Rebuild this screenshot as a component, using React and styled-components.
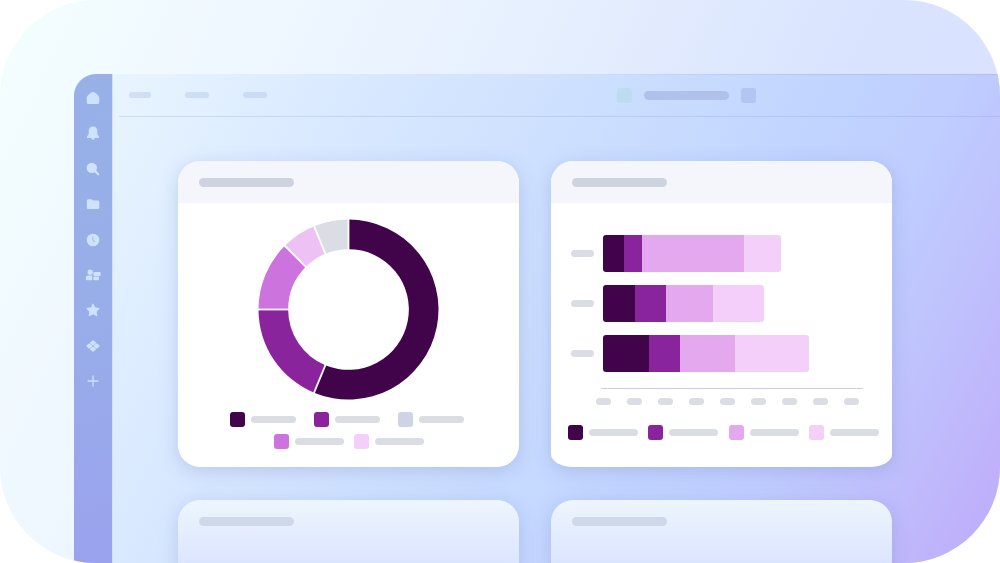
import React from 'react';
import styled, { createGlobalStyle } from 'styled-components';

const colors = {
  plum: '#41044a',
  purple: '#8a249d',
  orchid: '#cc73de',
  pink: '#e4a8ef',
  blush: '#f3cffa',
  rose: '#eec1f5',
  silver: '#cfd3e3',
  grey: '#dbdde4',
};

const GlobalStyle = createGlobalStyle`
  * {
    box-sizing: border-box;
  }
  body {
    margin: 0;
    background: #fff;
    font-family: 'Liberation Sans', sans-serif;
  }
`;

const Stage = styled.div`
  display: flex;
  height: 100vh;
  padding: 74px 0 0 74px;
  overflow: hidden;
  border-radius: 96px;
  background: linear-gradient(115deg, #f4fefe 0%, #eff7ff 22%, #e6effe 45%, #dae4fe 68%, #d8defe 100%);
`;

const Sidebar = styled.nav`
  flex: none;
  width: 39px;
  padding-top: 16px;
  border-right: 1px solid #cfe0fb;
  border-top-left-radius: 22px;
  background: linear-gradient(170deg, #97b1e7 0%, #98ade9 50%, #9aa2ee 100%);
`;

const IconList = styled.div`
  display: flex;
  flex-direction: column;
  align-items: center;
  justify-content: space-between;
  height: 299px;
`;

const IconButton = styled.button`
  display: block;
  width: 16px;
  height: 16px;
  padding: 0;
  border: none;
  background: transparent;
  color: #cfe2fc;
  cursor: pointer;

  svg {
    display: block;
  }
`;

const Main = styled.main`
  flex: 1;
  min-width: 0;
  background: linear-gradient(
    117deg,
    #e8f5ff 0%,
    #d8e8ff 23%,
    #cbdeff 46%,
    #c1d4ff 64%,
    #bfcdff 75%,
    #bfc2fd 84%,
    #bfb0fb 96%
  );
`;

const TopBar = styled.header`
  display: flex;
  align-items: center;
  height: 43px;
  margin-left: 6px;
  padding: 0 244px 0 10px;
  border-bottom: 1px solid rgba(120, 150, 210, 0.24);
  background: linear-gradient(90deg, transparent 50%, rgba(150, 175, 250, 0.45) 80%) top / 100% 1px no-repeat;
`;

const TopLinks = styled.div`
  display: flex;
  gap: 34px;
`;

const TopLink = styled.a`
  display: block;
  width: ${props => props.$width}px;
  height: 6px;
  border-radius: 3px;
  background: rgba(130, 155, 200, 0.22);
`;

const TopTools = styled.div`
  display: flex;
  align-items: center;
  gap: 12px;
  margin-left: auto;
`;

const ToolButton = styled.button`
  width: 15px;
  height: 15px;
  padding: 0;
  border: none;
  border-radius: 3px;
  background: ${props => props.$color};
`;

const Address = styled.div`
  width: 85px;
  height: 9px;
  border-radius: 5px;
  background: #b0c2eb;
`;

const CardGrid = styled.div`
  display: grid;
  grid-template-columns: 1fr 1fr;
  gap: 33px 32px;
  padding: 44px 108px 0 65px;
`;

const Card = styled.section`
  height: 306px;
  overflow: hidden;
  border-radius: ${props => (props.$flat ? '22px / 22px 22px 13px 13px' : '22px')};
  background: ${props => (props.$faded ? 'linear-gradient(#edf5fc, #dce5ff 64px)' : '#fff')};
  box-shadow: 0 4px 18px rgba(100, 120, 180, 0.26);
`;

const CardHeader = styled.div`
  display: flex;
  align-items: center;
  height: 42px;
  padding: 0 21px;
  background: ${props => (props.$faded ? 'transparent' : '#f4f6fb')};
`;

const CardTitle = styled.div`
  width: 95px;
  height: 9px;
  border-radius: 5px;
  background: ${props => (props.$faded ? '#ced8e9' : '#cfd3df')};
`;

const DonutBody = styled.div`
  display: flex;
  flex-direction: column;
  align-items: center;
  padding-top: 16px;

  svg {
    display: block;
    margin-bottom: 12px;
  }
`;

const Legend = styled.div`
  display: flex;
  justify-content: center;
  gap: ${props => props.$gap}px;
  margin-bottom: 7px;
`;

const LegendItem = styled.div`
  display: flex;
  align-items: center;
  gap: 6px;
`;

const Swatch = styled.span`
  width: 15px;
  height: 15px;
  border-radius: 3px;
  background: ${props => props.$color};
`;

const Pill = styled.span`
  width: ${props => props.$width}px;
  height: 7px;
  border-radius: 4px;
  background: ${colors.grey};
`;

const LegendGroup = styled.div`
  padding-right: 4px;
`;

const BarBody = styled.div`
  padding: 32px 29px 0 20px;
`;

const BarRow = styled.div`
  display: flex;
  align-items: center;
  gap: 9px;
  margin-bottom: 13px;
`;

const Track = styled.div`
  display: flex;
  flex: 1;
  height: 37px;
`;

const Segment = styled.div`
  background: ${props => props.$color};

  &:first-child {
    border-radius: 3px 0 0 3px;
  }
  &:last-child {
    border-radius: 0 3px 3px 0;
  }
`;

const AxisLine = styled.div`
  height: 1px;
  margin: 16px 0 9px 30px;
  background: #cccdd6;
`;

const Axis = styled.div`
  display: flex;
  justify-content: space-between;
  margin: 0 4px 0 25px;
`;

const BarLegend = styled.div`
  display: flex;
  justify-content: space-between;
  padding: 20px 13px 0 17px;
`;

const icons = [
  {
    label: 'Home',
    art: <path d="M1.700 8Q1.800 6.200 3 5.200L5.800 2.800Q8 1.200 10.200 2.800L13 5.200Q14.200 6.200 14.300 8V12.300Q14.300 14 12.600 14H3.400Q1.700 14 1.700 12.300Z" />,
  },
  {
    label: 'Notifications',
    art: <path d="M8 1.500C5.200 1.500 3.700 3.600 3.700 6.100V9.200L2 11.400V12.900H6.100Q6.500 14.700 8 14.700T9.900 12.900H14V11.400L12.300 9.200V6.100C12.300 3.600 10.800 1.500 8 1.500Z" />,
  },
  {
    label: 'Search',
    art: (
      <>
        <circle cx="6.800" cy="6.900" r="5.200" />
        <path d="M10 10L13.200 13.200" stroke="currentColor" strokeWidth="2.200" strokeLinecap="round" />
      </>
    ),
  },
  {
    label: 'Files',
    art: <path d="M1.800 4.800Q1.800 3.300 3.300 3.300H6.500L8 4.600H12.800Q14.300 4.600 14.300 6.100V11.600Q14.300 13.100 12.800 13.100H3.300Q1.800 13.100 1.800 11.600Z" />,
  },
  {
    label: 'Recent',
    art: (
      <>
        <circle cx="8" cy="8" r="6.300" />
        <path d="M7.800 4.800V8.300L10 10" fill="none" stroke="#a9c0f0" strokeWidth="1.200" />
      </>
    ),
  },
  {
    label: 'People',
    art: (
      <>
        <circle cx="5.200" cy="5.200" r="2.600" />
        <path d="M.8 10.900Q.8 8.500 3.200 8.500H7.200V13.300H2.200Q.8 13.300 .8 11.900Z" />
        <rect x="8.300" y="4.900" width="7.400" height="4" rx="1.200" />
        <rect x="8.300" y="9.600" width="5.700" height="3.700" rx="1" />
      </>
    ),
  },
  {
    label: 'Favorites',
    art: (
      <path
        d="M8 2.300L9.800 6L13.900 6.600L10.900 9.400L11.700 13.500L8 11.600L4.300 13.500L5.100 9.400L2.100 6.600L6.200 6Z"
        stroke="currentColor"
        strokeWidth="1.300"
        strokeLinejoin="round"
      />
    ),
  },
  {
    label: 'Apps',
    art: (
      <g stroke="currentColor" strokeWidth="1.400" strokeLinejoin="round">
        <path d="M8 3L10.300 4.900L8 6.800L5.700 4.900Z" />
        <path d="M8 9.200L10.300 11.100L8 13L5.700 11.100Z" />
        <path d="M4.300 6.100L6.600 8L4.300 9.900L2 8Z" />
        <path d="M11.700 6.100L14 8L11.700 9.900L9.400 8Z" />
      </g>
    ),
  },
  {
    label: 'Add',
    art: <path d="M8 3V13M3 8H13" stroke="currentColor" strokeWidth="1.300" strokeLinecap="round" />,
  },
];

// angles are in degrees, clockwise from the top
const slices = [
  { from: 0, to: 202.5, color: colors.plum },
  { from: 202.5, to: 270, color: colors.purple },
  { from: 270, to: 315, color: colors.orchid },
  { from: 315, to: 337.5, color: colors.rose },
  { from: 337.5, to: 360, color: colors.grey },
];

const bars = [
  [21, 18, 102, 37],
  [32, 31, 47, 51],
  [46, 31, 55, 74],
];
const barColors = [colors.plum, colors.purple, colors.pink, colors.blush];
const barMax = 260;

function point(radius, angle) {
  const rad = (angle * Math.PI) / 180;
  return `${91 + radius * Math.sin(rad)} ${91 - radius * Math.cos(rad)}`;
}

function slicePath({ from, to }) {
  const large = to - from > 180 ? 1 : 0;
  return `M${point(90.5, from)}A90.5 90.5 0 ${large} 1 ${point(90.5, to)}L${point(60.7, to)}A60.7 60.7 0 ${large} 0 ${point(60.7, from)}Z`;
}

function Donut() {
  return (
    <svg width="181" height="181" viewBox="0 0 182 182" role="img" aria-label="Donut chart">
      {slices.map(slice => (
        <path key={slice.from} d={slicePath(slice)} fill={slice.color} />
      ))}
      {slices.map(slice => (
        <path key={slice.from} d={`M${point(59, slice.from)}L${point(91, slice.from)}`} stroke="#fff" strokeWidth="1.8" />
      ))}
    </svg>
  );
}

function LegendEntry({ color, width }) {
  return (
    <LegendItem>
      <Swatch $color={color} />
      <Pill $width={width} />
    </LegendItem>
  );
}

function DonutCard() {
  return (
    <Card>
      <CardHeader>
        <CardTitle />
      </CardHeader>
      <DonutBody>
        <Donut />
        <LegendGroup>
          <Legend $gap={18}>
            <LegendEntry color={colors.plum} width={45} />
            <LegendEntry color={colors.purple} width={45} />
            <LegendEntry color={colors.silver} width={45} />
          </Legend>
        </LegendGroup>
        <Legend $gap={10}>
          <LegendEntry color={colors.orchid} width={49} />
          <LegendEntry color={colors.blush} width={49} />
        </Legend>
      </DonutBody>
    </Card>
  );
}

function BarCard() {
  return (
    <Card $flat>
      <CardHeader>
        <CardTitle />
      </CardHeader>
      <BarBody>
        {bars.map((values, row) => (
          <BarRow key={row}>
            <Pill $width={23} />
            <Track>
              {values.map((value, index) => (
                <Segment key={index} $color={barColors[index]} style={{ width: `${(value / barMax) * 100}%` }} />
              ))}
            </Track>
          </BarRow>
        ))}
        <AxisLine />
        <Axis>
          {Array.from({ length: 9 }, (_, index) => (
            <Pill key={index} $width={15} />
          ))}
        </Axis>
      </BarBody>
      <BarLegend>
        {barColors.map(color => (
          <LegendEntry key={color} color={color} width={49} />
        ))}
      </BarLegend>
    </Card>
  );
}

function FadedCard() {
  return (
    <Card $faded>
      <CardHeader $faded>
        <CardTitle $faded />
      </CardHeader>
    </Card>
  );
}

export default function App() {
  return (
    <>
      <GlobalStyle />
      <Stage>
        <Sidebar>
          <IconList>
            {icons.map(icon => (
              <IconButton key={icon.label} type="button" aria-label={icon.label}>
                <svg width="16" height="16" viewBox="0 0 16 16" fill="currentColor">
                  {icon.art}
                </svg>
              </IconButton>
            ))}
          </IconList>
        </Sidebar>
        <Main>
          <TopBar>
            <TopLinks>
              <TopLink href="#overview" aria-label="Overview" $width={22} />
              <TopLink href="#reports" aria-label="Reports" $width={24} />
              <TopLink href="#settings" aria-label="Settings" $width={24} />
            </TopLinks>
            <TopTools>
              <ToolButton type="button" aria-label="Status" $color="#bddcef" />
              <Address />
              <ToolButton type="button" aria-label="Account" $color="#b3c5f2" />
            </TopTools>
          </TopBar>
          <CardGrid>
            <DonutCard />
            <BarCard />
            <FadedCard />
            <FadedCard />
          </CardGrid>
        </Main>
      </Stage>
    </>
  );
}
